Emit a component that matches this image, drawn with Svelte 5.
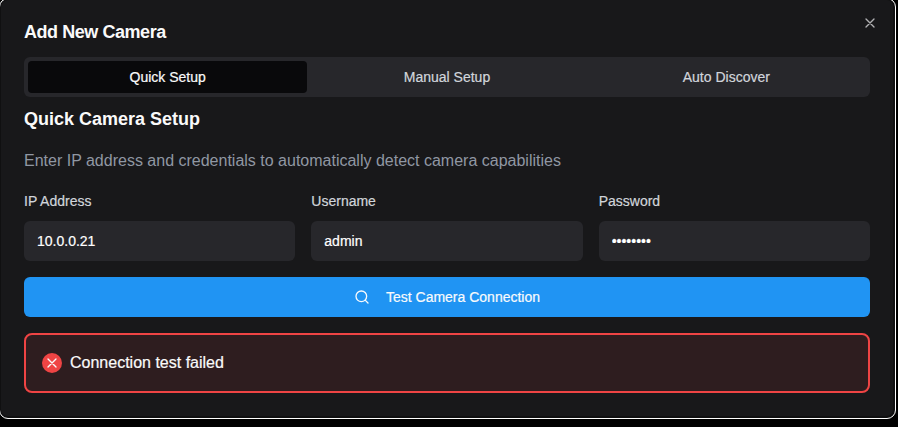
<script>
  const tabs = ['Quick Setup', 'Manual Setup', 'Auto Discover'];
  let active = $state('Quick Setup');
  let ip = $state('10.0.0.21');
  let username = $state('admin');
  let password = $state('password');
</script>

<div class="page">
  <section class="dialog" role="dialog" aria-label="Add New Camera">
    <button class="close" aria-label="Close">
      <svg width="16" height="16" viewBox="0 0 24 24"><path d="M18 6 6 18M6 6l12 12" /></svg>
    </button>
    <h2>Add New Camera</h2>
    <div class="tabs" role="tablist">
      {#each tabs as tab}
        <button role="tab" aria-selected={active === tab} class:active={active === tab} onclick={() => (active = tab)}>{tab}</button>
      {/each}
    </div>
    <h3>Quick Camera Setup</h3>
    <p class="hint">Enter IP address and credentials to automatically detect camera capabilities</p>
    <div class="fields">
      <label><span>IP Address</span><input bind:value={ip} /></label>
      <label><span>Username</span><input bind:value={username} /></label>
      <label><span>Password</span><input type="password" bind:value={password} /></label>
    </div>
    <button class="test">
      <svg width="16" height="16" viewBox="0 0 24 24"><circle cx="11" cy="11" r="8" /><path d="m21 21-4.3-4.3" /></svg>
      <span>Test Camera Connection</span>
    </button>
    <div class="alert">
      <span class="badge"><svg width="16" height="16" viewBox="0 0 24 24"><path d="M18 6 6 18M6 6l12 12" /></svg></span>
      <span>Connection test failed</span>
    </div>
  </section>
</div>

<style>
  :global(body) { background: #000; }
  .page {
    width: 898px;
    height: 427px;
    overflow: hidden;
    font-family: "Liberation Sans", Arial, sans-serif;
    color: #fafafa;
    -webkit-text-stroke: 0.2px currentColor;
  }
  .page, .page * { box-sizing: border-box; }
  .dialog {
    position: relative;
    display: flex;
    flex-direction: column;
    width: 897px;
    height: 421px;
    margin: -2px 0 0 -1px;
    padding: 23px 25px 0 24px;
    border: 1px solid #fff;
    border-radius: 9px;
    background: #18181a;
    box-shadow: inset 0 0 0 1px #101011, inset -1px -1px 0 1px #101011;
  }
  h2, h3 { margin: 0; font-size: 18px; font-weight: 700; line-height: 20px; -webkit-text-stroke: 0; }
  h2 { letter-spacing: -0.45px; }
  h3 { margin-top: 12px; }
  button { border: 0; font-family: inherit; }
  svg { fill: none; stroke: currentColor; stroke-width: 2; stroke-linecap: round; stroke-linejoin: round; }
  .close {
    position: absolute;
    top: 16px;
    right: 17px;
    display: flex;
    padding: 0;
    background: none;
    color: #b1b1b3;
  }
  .tabs {
    display: grid;
    grid-template-columns: repeat(3, 1fr);
    height: 40px;
    margin-top: 15px;
    padding: 4px;
    border-radius: 6px;
    background: #27272b;
  }
  .tabs button {
    padding: 0;
    border-radius: 4px;
    background: none;
    color: #d1d5db;
    font-size: 14px;
  }
  .tabs .active { background: #09090b; color: #fafafa; }
  .hint { margin: 20px 0 0; color: #9097a3; font-size: 16px; line-height: 24px; -webkit-text-stroke: 0; }
  .fields {
    display: grid;
    grid-template-columns: repeat(3, 1fr);
    gap: 16px;
    margin-top: 18px;
  }
  label { display: flex; flex-direction: column; gap: 10px; color: #d1d5db; font-size: 14px; line-height: 20px; }
  input {
    width: 100%;
    height: 40px;
    padding: 0 13px;
    border: 0;
    border-radius: 6px;
    outline: none;
    background: #27272b;
    color: #fff;
    font: 14px "Liberation Sans", Arial, sans-serif;
  }
  .test {
    display: flex;
    align-items: center;
    justify-content: center;
    gap: 16px;
    height: 40px;
    margin-top: 16px;
    border-radius: 6px;
    background: #2094f3;
    color: #f8fafc;
    font-size: 14px;
  }
  .alert {
    display: flex;
    align-items: center;
    gap: 8px;
    height: 60px;
    margin-top: 16px;
    padding: 0 16px;
    border: 2px solid #ef4444;
    border-radius: 8px;
    background: #2e1d1f;
    font-size: 16px;
  }
  .badge {
    display: flex;
    align-items: center;
    justify-content: center;
    width: 20px;
    height: 20px;
    border-radius: 50%;
    background: #ef4444;
  }
</style>
